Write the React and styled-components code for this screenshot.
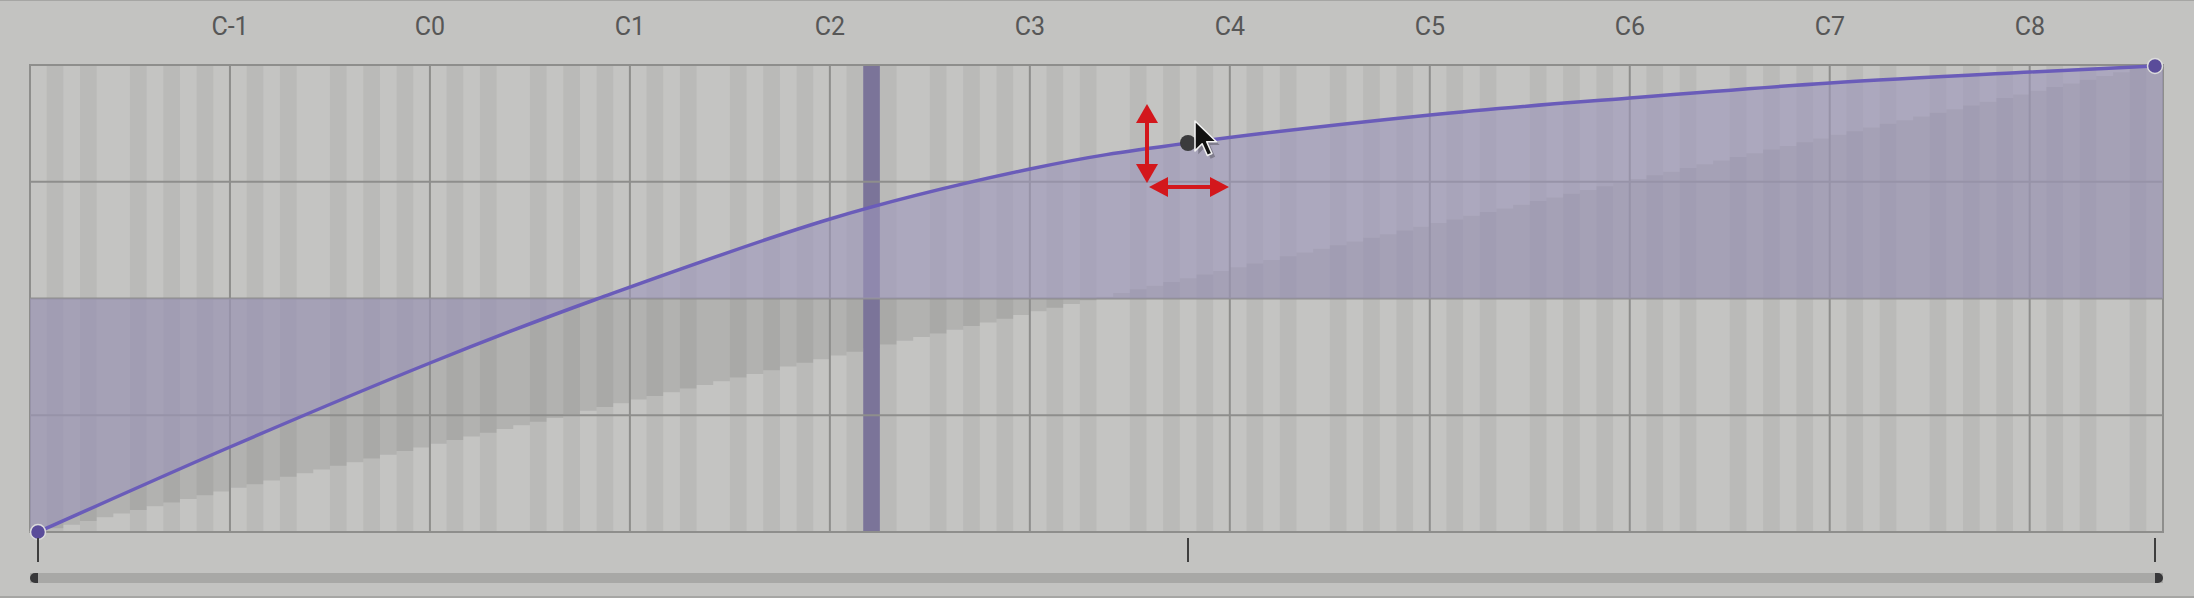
import React from "react";
import styled, { createGlobalStyle } from "styled-components";

const KEYS = 128;
const GRID_W = 2133;
const GRID_H = 467;
const KEY_W = GRID_W / KEYS;
const MID = GRID_H / 2;
const BLACK = [1, 3, 6, 8, 10];
const OCTAVES = ["C-1", "C0", "C1", "C2", "C3", "C4", "C5", "C6", "C7", "C8"];
const PLAYHEAD_KEY = 50;

// points picked off the velocity curve, grid coords
const curvePoints = [
  [8, 467],
  [200, 382],
  [400, 298],
  [567, 234],
  [800, 154],
  [1000, 104],
  [1158, 78],
  [1400, 50],
  [1600, 33],
  [1800, 18],
  [2000, 7],
  [2125, 1],
];

const HANDLE = [1158, 78];

function curveSegments(pts) {
  let d = "";
  for (let i = 0; i < pts.length - 1; i++) {
    const p0 = pts[i - 1] || pts[i];
    const p1 = pts[i];
    const p2 = pts[i + 1];
    const p3 = pts[i + 2] || p2;
    const c1 = [p1[0] + (p2[0] - p0[0]) / 6, p1[1] + (p2[1] - p0[1]) / 6];
    const c2 = [p2[0] - (p3[0] - p1[0]) / 6, p2[1] - (p3[1] - p1[1]) / 6];
    d += ` C${c1[0]},${c1[1]} ${c2[0]},${c2[1]} ${p2[0]},${p2[1]}`;
  }
  return d;
}

function staircase() {
  let d = `M0,${MID}`;
  for (let i = 0; i < KEYS; i++) {
    const y = GRID_H - (i * GRID_H) / (KEYS - 1);
    d += ` L${i * KEY_W},${y} L${(i + 1) * KEY_W},${y}`;
  }
  return d + ` L${GRID_W},${MID} Z`;
}

const GlobalStyle = createGlobalStyle`
  html, body {
    margin: 0;
    padding: 0;
    background: #c3c3c1;
  }
  body {
    font-family: Roboto, "Liberation Sans", sans-serif;
  }
`;

const Panel = styled.div`
  width: 2194px;
  height: 598px;
  box-sizing: border-box;
  border-top: 1px solid #a6a6a4;
  border-bottom: 2px solid #a6a6a4;
  background: #c3c3c1;
  display: flex;
  flex-direction: column;
  overflow: hidden;
`;

const LabelRow = styled.div`
  height: 64px;
  box-sizing: border-box;
  padding-left: 130px;
  padding-top: 11px;
  display: flex;
`;

const OctaveLabel = styled.div`
  width: 200px;
  text-align: center;
  font-size: 25px;
  color: #575757;
  line-height: 29px;
`;

const Chart = styled.svg`
  display: block;
  margin-left: 30px;
  overflow: visible;
  flex: none;
`;

const TickRow = styled.div`
  position: relative;
  height: 41px;
  flex: none;
`;

const Tick = styled.div`
  position: absolute;
  top: 6px;
  width: 2px;
  height: 24px;
  margin-left: -1px;
  background: #3e3e3e;
`;

const Track = styled.div`
  margin-left: 30px;
  width: ${GRID_W}px;
  height: 10px;
  background: #a8a8a6;
  display: flex;
  justify-content: space-between;
  flex: none;
`;

const Thumb = styled.div`
  width: 8px;
  height: 10px;
  background: #38383a;
  border-radius: ${(p) => (p.$side === "left" ? "5px 0 0 5px" : "0 5px 5px 0")};
`;

function KeyStripes() {
  const rects = [];
  for (let i = 0; i < KEYS; i++) {
    if (BLACK.includes(i % 12)) {
      rects.push(
        <rect key={i} x={i * KEY_W} y={0} width={KEY_W} height={GRID_H} fill="#babab8" />
      );
    }
  }
  return <g>{rects}</g>;
}

function GridLines() {
  const lines = [];
  for (let o = 1; o <= 10; o++) {
    const x = o * 12 * KEY_W;
    lines.push(<line key={"v" + o} x1={x} y1={0} x2={x} y2={GRID_H} />);
  }
  for (let r = 1; r < 4; r++) {
    const y = (r * GRID_H) / 4;
    lines.push(<line key={"h" + r} x1={0} y1={y} x2={GRID_W} y2={y} />);
  }
  return (
    <g stroke="#8e8e8c" strokeWidth="2">
      {lines}
      <rect x={0} y={0} width={GRID_W} height={GRID_H} fill="none" />
    </g>
  );
}

function RedArrows() {
  const vx = 1117;
  const hy = 122;
  return (
    <g fill="#d3171c">
      <rect x={vx - 2} y={55} width={4} height={47} />
      <polygon points={`${vx},39 ${vx - 11},58 ${vx + 11},58`} />
      <polygon points={`${vx},118 ${vx - 11},99 ${vx + 11},99`} />
      <rect x={1135} y={hy - 2} width={48} height={4} />
      <polygon points={`1119,${hy} 1138,${hy - 10} 1138,${hy + 10}`} />
      <polygon points={`1199,${hy} 1180,${hy - 10} 1180,${hy + 10}`} />
    </g>
  );
}

function Cursor({ x, y }) {
  return (
    <g transform={`translate(${x},${y}) scale(1.3)`}>
      <path
        d="M1,1 L1,24 L6.5,18.5 L10.5,27.5 L14,26 L10,17 L17.5,17 Z"
        fill="rgba(0,0,0,0.25)"
        transform="translate(1.5,1.5)"
      />
      <path
        d="M0,0 L0,23 L5.5,17.5 L9.5,26.5 L13,25 L9,16 L16.5,16 Z"
        fill="#111"
        stroke="#f2f2f2"
        strokeWidth="1.2"
        strokeLinejoin="round"
      />
    </g>
  );
}

function VelocityChart() {
  const first = curvePoints[0];
  const last = curvePoints[curvePoints.length - 1];
  const segs = curveSegments(curvePoints);
  const linePath = `M${first[0]},${first[1]}${segs}`;
  const fillPath = `M0,${MID} L0,${GRID_H} L${first[0]},${first[1]}${segs} L${GRID_W},${last[1]} L${GRID_W},${MID} Z`;

  return (
    <Chart width={GRID_W} height={GRID_H} viewBox={`0 0 ${GRID_W} ${GRID_H}`}>
      <rect x={0} y={0} width={GRID_W} height={GRID_H} fill="#c4c4c2" />
      <KeyStripes />
      <path d={staircase()} fill="rgba(0,0,0,0.09)" />
      <rect
        x={PLAYHEAD_KEY * KEY_W}
        y={0}
        width={KEY_W}
        height={GRID_H}
        fill="#7b7499"
      />
      <GridLines />
      <path d={fillPath} fill="rgba(156,150,187,0.6)" />
      <path d={linePath} fill="none" stroke="#6a5cb9" strokeWidth="3.5" />
      <circle cx={first[0]} cy={first[1]} r="7.5" fill="#5a4c9a" stroke="#dcdcdc" strokeWidth="1.5" />
      <circle cx={last[0]} cy={last[1]} r="7.5" fill="#5a4c9a" stroke="#dcdcdc" strokeWidth="1.5" />
      <RedArrows />
      <circle cx={HANDLE[0]} cy={HANDLE[1]} r="8" fill="#3b3b3d" />
      <Cursor x={1165} y={56} />
    </Chart>
  );
}

export default function App() {
  const ticks = [curvePoints[0][0], HANDLE[0], curvePoints[curvePoints.length - 1][0]];
  return (
    <>
      <GlobalStyle />
      <Panel>
        <LabelRow>
          {OCTAVES.map((o) => (
            <OctaveLabel key={o}>{o}</OctaveLabel>
          ))}
        </LabelRow>
        <VelocityChart />
        <TickRow>
          {ticks.map((t) => (
            <Tick key={t} style={{ left: 30 + t }} />
          ))}
        </TickRow>
        <Track>
          <Thumb $side="left" />
          <Thumb $side="right" />
        </Track>
      </Panel>
    </>
  );
}
